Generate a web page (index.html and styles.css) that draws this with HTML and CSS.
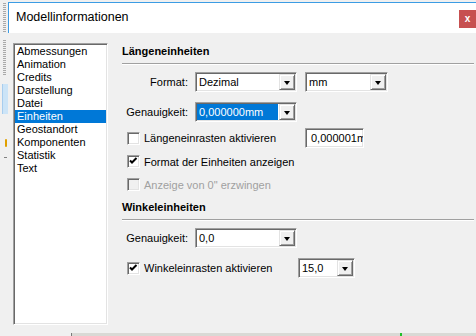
FILE: index.html
```html
<!DOCTYPE html>
<html lang="de">
<head>
  <meta charset="UTF-8">
  <title>Modellinformationen</title>
  <link rel="stylesheet" href="styles.css">
</head>
<body>
  <div class="desk">
    <!-- toolbar remains at the left edge -->
    <div class="strip">
      <div class="grip"></div>
      <div class="grip grip-2"></div>
      <div class="tab-sel"></div>
      <div class="mark-orange"></div>
      <div class="mark-dash"></div>
    </div>

    <div class="dialog">
      <div class="titlebar">
        <span class="title">Modellinformationen</span>
        <span class="close">x</span>
      </div>

      <div class="content">
        <ul class="list">
          <li>Abmessungen</li>
          <li>Animation</li>
          <li>Credits</li>
          <li>Darstellung</li>
          <li>Datei</li>
          <li class="sel">Einheiten</li>
          <li>Geostandort</li>
          <li>Komponenten</li>
          <li>Statistik</li>
          <li>Text</li>
        </ul>

        <div class="panel">
          <!-- Length units -->
          <div class="group-title">Längeneinheiten</div>
          <div class="sep"></div>

          <div class="row row-first">
            <span class="lbl">Format:</span>
            <div class="combo w-main"><span class="val">Dezimal</span><span class="drop"><i class="arrow"></i></span></div>
            <div class="combo w-unit"><span class="val">mm</span><span class="drop"><i class="arrow"></i></span></div>
          </div>

          <div class="row row-gap">
            <span class="lbl">Genauigkeit:</span>
            <div class="combo w-main"><span class="val hl">0,000000mm</span><span class="drop"><i class="arrow"></i></span></div>
          </div>

          <div class="chk-row chk-tall chk-first">
            <span class="box"></span>
            <span class="chk-label w-snap">Längeneinrasten aktivieren</span>
            <div class="edit">0,000001mm</div>
          </div>

          <div class="chk-row chk-second">
            <span class="box"><svg width="9" height="9" viewBox="0 0 9 9"><path d="M1 3.5 L3 5.5 L7.5 1" fill="none" stroke="#000" stroke-width="2"/></svg></span>
            <span class="chk-label">Format der Einheiten anzeigen</span>
          </div>

          <div class="chk-row chk-third disabled">
            <span class="box"></span>
            <span class="chk-label">Anzeige von 0" erzwingen</span>
          </div>

          <!-- Angle units -->
          <div class="group-title group-2">Winkeleinheiten</div>
          <div class="sep"></div>

          <div class="row row-first">
            <span class="lbl">Genauigkeit:</span>
            <div class="combo w-main"><span class="val">0,0</span><span class="drop"><i class="arrow"></i></span></div>
          </div>

          <div class="chk-row chk-tall row-gap">
            <span class="box"><svg width="9" height="9" viewBox="0 0 9 9"><path d="M1 3.5 L3 5.5 L7.5 1" fill="none" stroke="#000" stroke-width="2"/></svg></span>
            <span class="chk-label w-angle">Winkeleinrasten aktivieren</span>
            <div class="combo w-small"><span class="val">15,0</span><span class="drop"><i class="arrow"></i></span></div>
          </div>
        </div>
      </div>
    </div>
  </div>

  <div class="taskbar"><span class="task-mark"></span></div>
</body>
</html>
```

FILE: styles.css
```css
* {
  box-sizing: border-box;
}

body {
  margin: 0;
  width: 476px;
  height: 336px;
  overflow: hidden;
  background: #f0f0f0;
  font-family: "Liberation Sans", Arial, sans-serif;
  font-size: 11px;
  color: #000;
}

.desk {
  display: flex;
  height: 333px;
}

/* left strip */
.strip {
  width: 8px;
  display: flex;
  flex-direction: column;
}

.grip {
  width: 3px;
  height: 30px;
  margin: 3px 0 0 3px;
  background: repeating-linear-gradient(to bottom, #a9a9a9 0 1px, transparent 1px 2px);
}

.grip-2 {
  height: 35px;
  margin-top: 7px;
}

.tab-sel {
  width: 6px;
  height: 30px;
  margin: 9px 0 0 2px;
  background: #cce4f7;
  border-left: 1px solid #a8cdee;
}

.mark-orange {
  width: 2px;
  height: 8px;
  margin: 25px 0 0 5px;
  background: #e0a000;
  border-radius: 1px;
}

.mark-dash {
  width: 3px;
  height: 1px;
  margin: 10px 0 0 4px;
  background: #808080;
}

/* dialog */
.dialog {
  flex: 1;
  margin-top: 2px;
  border-top: 1px solid #3c9ce4;
  display: flex;
  flex-direction: column;
}

.titlebar {
  height: 30px;
  background: #fff;
  border-left: 1px solid #3c9ce4;
  padding-left: 7px;
  display: flex;
  align-items: flex-start;
}

.title {
  font-size: 12.5px;
  line-height: 15px;
  margin-top: 7px;
}

.close {
  margin-left: auto;
  margin-top: 7px;
  width: 17px;
  height: 18px;
  background: #c75050;
  color: #fff;
  font-size: 10px;
  font-weight: bold;
  line-height: 17px;
  text-align: center;
}

.content {
  flex: 1;
  display: flex;
  align-items: flex-start;
  padding: 10px 0 0 5px;
}

/* sunken 3d look used by list, fields and boxes */
.list, .combo, .edit, .box {
  background: #fff;
  border: 1px solid;
  border-color: #a0a0a0 #fff #fff #a0a0a0;
  box-shadow: inset 1px 1px #696969, inset -1px -1px #e3e3e3;
}

.list {
  width: 95px;
  height: 282px;
  margin: 0;
  padding: 1px;
  list-style: none;
}

.list li {
  height: 13px;
  line-height: 13px;
  padding-left: 2px;
  white-space: nowrap;
}

.list li.sel {
  background: #0078d7;
  color: #fff;
}

.panel {
  flex: 1;
  margin: 0 2px 0 14px;
}

.group-title {
  font-weight: bold;
  line-height: 13px;
  margin-top: 2px;
}

.group-2 {
  margin-top: 10px;
}

.sep {
  margin-top: 5px;
  border-top: 1px solid #a0a0a0;
  border-bottom: 1px solid #fff;
}

.row {
  display: flex;
  align-items: center;
  height: 20px;
}

.row-first {
  margin-top: 7px;
}

.row-gap {
  margin-top: 10px;
}

.lbl {
  width: 66px;
  margin-right: 7px;
  text-align: right;
  white-space: nowrap;
}

.combo {
  height: 20px;
  padding: 1px;
  display: flex;
  align-items: center;
}

.w-main {
  width: 102px;
}

.w-unit {
  width: 83px;
  margin-left: 8px;
}

.w-small {
  width: 57px;
}

.val {
  flex: 1;
  height: 16px;
  line-height: 16px;
  padding-left: 2px;
  white-space: nowrap;
  overflow: hidden;
}

.val.hl {
  background: #0078d7;
  color: #fff;
  margin-right: 1px;
}

.drop {
  width: 16px;
  height: 16px;
  background: #f0f0f0;
  border: 1px solid;
  border-color: #e3e3e3 #696969 #696969 #e3e3e3;
  box-shadow: inset 1px 1px #fff, inset -1px -1px #a0a0a0;
  display: flex;
  align-items: center;
  justify-content: center;
}

.arrow {
  width: 0;
  height: 0;
  border-left: 3.5px solid transparent;
  border-right: 3.5px solid transparent;
  border-top: 4px solid #000;
  margin-top: 1px;
}

/* checkboxes */
.chk-row {
  display: flex;
  align-items: center;
  padding-left: 5px;
  height: 13px;
}

.chk-tall {
  height: 20px;
}

.chk-first {
  margin-top: 6px;
}

.chk-second {
  margin-top: 7px;
}

.chk-third {
  margin-top: 10px;
}

.box {
  width: 13px;
  height: 13px;
  margin-right: 4px;
  display: flex;
  align-items: center;
  justify-content: center;
  flex-shrink: 0;
}

.box svg {
  display: block;
}

.chk-label {
  white-space: nowrap;
}

.w-snap {
  width: 161px;
}

.w-angle {
  width: 154px;
}

.disabled .box {
  background: #f0f0f0;
}

.disabled .chk-label {
  color: #a0a0a0;
}

.edit {
  width: 59px;
  height: 20px;
  padding: 0 0 0 5px;
  line-height: 18px;
  white-space: nowrap;
  overflow: hidden;
}

/* bottom edge */
.taskbar {
  height: 3px;
  margin-left: 71px;
  background: #d9d9d5;
  border-left: 1px solid #7a7a7a;
}

.task-mark {
  display: block;
  width: 2px;
  height: 3px;
  margin-left: 328px;
  background: #22c02a;
}
```
